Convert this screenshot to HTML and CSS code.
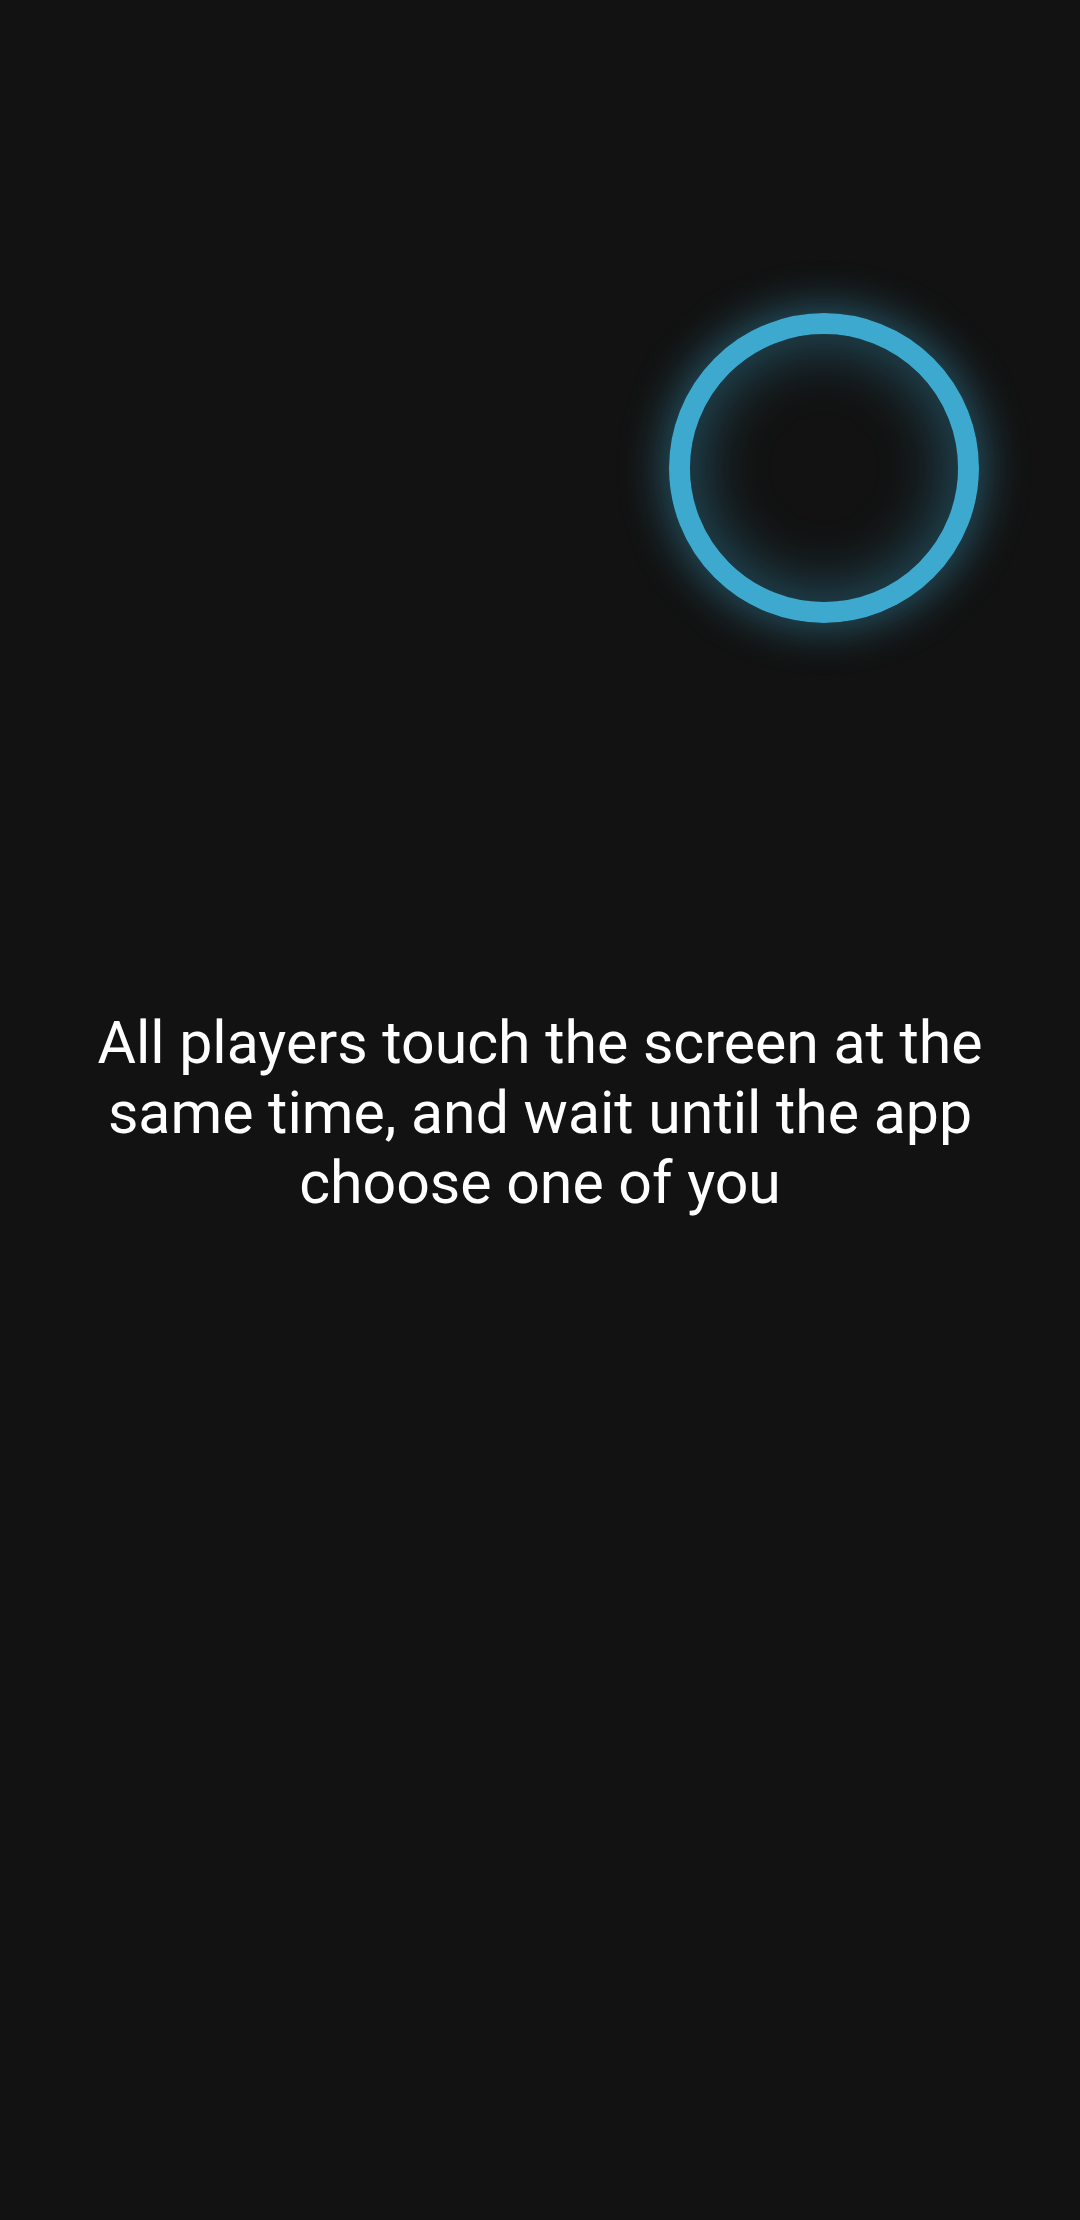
FILE: index.html
```html
<!DOCTYPE html>
<html>
<head>
<meta charset="utf-8">
<link rel="stylesheet" href="styles.css">
</head>
<body>
<div class="screen">
  <div class="touch"></div>
  <p class="hint">All players touch the screen at the same time, and wait until the app choose one of you</p>
</div>
</body>
</html>
```
FILE: styles.css
```css
html, body {
  margin: 0;
  padding: 0;
  background: #121212;
}
.screen {
  position: relative;
  width: 1080px;
  height: 2220px;
  display: flex;
  align-items: center;
  justify-content: center;
  padding-top: 6px;
  box-sizing: border-box;
  overflow: hidden;
}
.touch {
  position: absolute;
  left: 669px;
  top: 313px;
  width: 310px;
  height: 310px;
  box-sizing: border-box;
  border: 21px solid #3da9cf;
  border-radius: 50%;
  box-shadow: 0 0 44px 6px rgba(61, 169, 207, 0.45), inset 0 0 60px 10px rgba(61, 169, 207, 0.38);
}
.hint {
  margin: 0;
  padding: 0 80px;
  font-family: Roboto, "Noto Sans", sans-serif;
  font-size: 59px;
  line-height: 70px;
  color: #ffffff;
  text-align: center;
}
```
